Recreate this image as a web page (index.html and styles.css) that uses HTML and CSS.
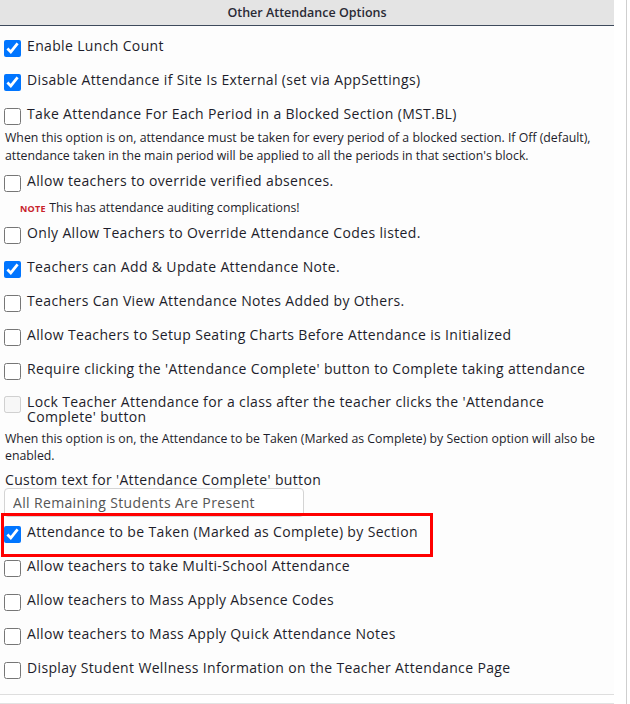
FILE: index.html
```html
<!DOCTYPE html>
<html lang="en">
<head>
    <meta charset="UTF-8">
    <meta name="viewport" content="width=device-width, initial-scale=1.0">
    <title>Other Attendance Options</title>
    <link rel="stylesheet" href="styles.css">
</head>
<body>
    <div class="page">
        <section class="panel">
            <h2 class="panel-title">Other Attendance Options</h2>

            <div class="options">
                <label class="option"><input type="checkbox" checked> Enable Lunch Count</label>
                <label class="option"><input type="checkbox" checked> Disable Attendance if Site Is External (set via AppSettings)</label>
                <label class="option"><input type="checkbox"> Take Attendance For Each Period in a Blocked Section (MST.BL)</label>
                <p class="help">When this option is on, attendance must be taken for every period of a blocked section. If Off (default), attendance taken in the main period will be applied to all the periods in that section's block.</p>

                <label class="option"><input type="checkbox"> Allow teachers to override verified absences.</label>
                <p class="note"><span class="note-tag">NOTE</span> This has attendance auditing complications!</p>

                <label class="option"><input type="checkbox"> Only Allow Teachers to Override Attendance Codes listed.</label>
                <label class="option"><input type="checkbox" checked> Teachers can Add &amp; Update Attendance Note.</label>
                <label class="option"><input type="checkbox"> Teachers Can View Attendance Notes Added by Others.</label>
                <label class="option"><input type="checkbox"> Allow Teachers to Setup Seating Charts Before Attendance is Initialized</label>
                <label class="option"><input type="checkbox"> Require clicking the 'Attendance Complete' button to Complete taking attendance</label>
                <label class="option option-wrap"><input type="checkbox" disabled> <span>Lock Teacher Attendance for a class after the teacher clicks the 'Attendance Complete' button</span></label>
                <p class="help help-lock">When this option is on, the Attendance to be Taken (Marked as Complete) by Section option will also be enabled.</p>

                <div class="custom-text">
                    <label for="complete-text">Custom text for 'Attendance Complete' button</label>
                    <input type="text" id="complete-text" value="All Remaining Students Are Present">
                </div>

                <div class="highlight">
                    <label class="option"><input type="checkbox" checked> Attendance to be Taken (Marked as Complete) by Section</label>
                </div>

                <label class="option"><input type="checkbox"> Allow teachers to take Multi-School Attendance</label>
                <label class="option"><input type="checkbox"> Allow teachers to Mass Apply Absence Codes</label>
                <label class="option"><input type="checkbox"> Allow teachers to Mass Apply Quick Attendance Notes</label>
                <label class="option"><input type="checkbox"> Display Student Wellness Information on the Teacher Attendance Page</label>
            </div>
        </section>
        <div class="next-panel"></div>
    </div>
</body>
</html>
```

FILE: styles.css
```css
body {
    margin: 0;
    font-family: "Open Sans", "Noto Sans", sans-serif;
    color: #1d1d2b;
    background-color: white;
}

.page {
    width: 626px;
    min-height: 704px;
    border-right: 1px solid #cfcfcf;
}

.panel {
    width: 614px;
    background-color: #fdfdfd;
    border-bottom: 1px solid #dedede;
    padding-bottom: 7px;
}

.panel-title {
    margin: 0;
    height: 25px;
    line-height: 25px;
    background-color: #e4e4e4;
    border-bottom: 1px solid #3e4a5c;
    text-align: center;
    font-size: 12.5px;
    font-weight: 600;
    color: #2a2a35;
}

.options {
    padding-top: 5px;
}

.option {
    display: flex;
    align-items: center;
    height: 30px;
    margin-bottom: 4px;
    font-size: 14px;
    letter-spacing: 0.35px;
    line-height: 18px;
    white-space: nowrap;
}

.option input {
    width: 17px;
    height: 17px;
    margin: 4px 6px 0 4px;
    flex-shrink: 0;
}

.option-wrap {
    align-items: flex-start;
    height: auto;
    padding-top: 6px;
    white-space: normal;
    line-height: 15px;
}

.option-wrap span {
    max-width: 525px;
}

.option-wrap input {
    margin-top: 2px;
}

.help {
    margin: -4px 0 1px 5px;
    font-size: 12.3px;
    line-height: 18px;
    padding-right: 8px;
}

.help-lock {
    margin-top: 6px;
    line-height: 17px;
}

.note {
    margin: -1px 0 0 20px;
    font-size: 12.3px;
    line-height: 18px;
}

.note-tag {
    color: #c8232c;
    font-size: 9px;
    font-weight: 700;
    letter-spacing: 0.3px;
}

.custom-text {
    margin: 8px 0 0 4px;
}

.custom-text label {
    display: block;
    font-size: 14px;
    letter-spacing: 0.35px;
    line-height: 16px;
    margin-left: 1px;
}

.custom-text input {
    width: 300px;
    height: 29px;
    box-sizing: border-box;
    border: 1px solid #d4d4d4;
    border-radius: 4px;
    padding: 0 8px;
    font-family: inherit;
    font-size: 14px;
    letter-spacing: 0.35px;
    color: #555;
    background-color: white;
}

.highlight {
    position: relative;
}

.highlight::after {
    content: "";
    position: absolute;
    top: -4px;
    left: 1px;
    width: 426px;
    height: 38px;
    border: 3px solid #f00;
    pointer-events: none;
}

.next-panel {
    margin-top: 8px;
    width: 614px;
    border-top: 1px solid #e2e2e2;
}
```
